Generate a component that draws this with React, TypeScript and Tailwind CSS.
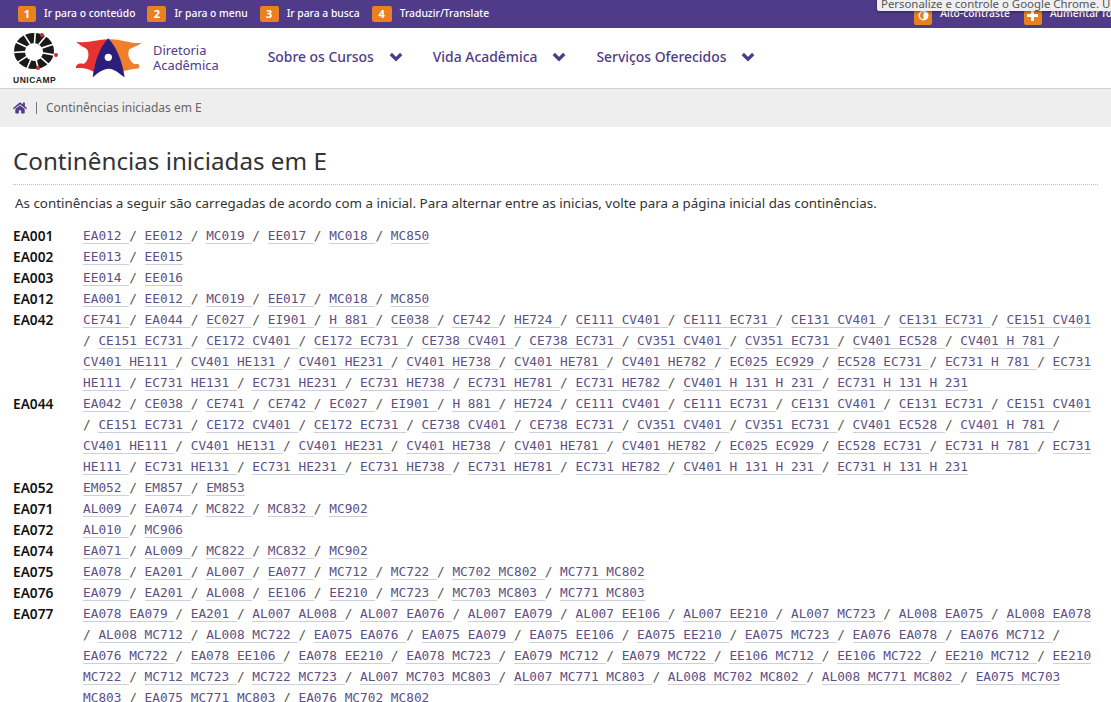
import React from "react";
import { FaHome } from "react-icons/fa";

type Entry = { code: string; links: string[] };

const sansFont = "font-['Noto_Sans','Open_Sans',sans-serif]";

const commonEA04x = [
  "CE111 CV401", "CE111 EC731", "CE131 CV401", "CE131 EC731", "CE151 CV401", "CE151 EC731",
  "CE172 CV401", "CE172 EC731", "CE738 CV401", "CE738 EC731", "CV351 CV401", "CV351 EC731",
  "CV401 EC528", "CV401 H 781", "CV401 HE111", "CV401 HE131", "CV401 HE231", "CV401 HE738",
  "CV401 HE781", "CV401 HE782", "EC025 EC929", "EC528 EC731", "EC731 H 781", "EC731 HE111",
  "EC731 HE131", "EC731 HE231", "EC731 HE738", "EC731 HE781", "EC731 HE782",
  "CV401 H 131 H 231", "EC731 H 131 H 231",
];

const entries: Entry[] = [
  { code: "EA001", links: ["EA012", "EE012", "MC019", "EE017", "MC018", "MC850"] },
  { code: "EA002", links: ["EE013", "EE015"] },
  { code: "EA003", links: ["EE014", "EE016"] },
  { code: "EA012", links: ["EA001", "EE012", "MC019", "EE017", "MC018", "MC850"] },
  { code: "EA042", links: ["CE741", "EA044", "EC027", "EI901", "H 881", "CE038", "CE742", "HE724", ...commonEA04x] },
  { code: "EA044", links: ["EA042", "CE038", "CE741", "CE742", "EC027", "EI901", "H 881", "HE724", ...commonEA04x] },
  { code: "EA052", links: ["EM052", "EM857", "EM853"] },
  { code: "EA071", links: ["AL009", "EA074", "MC822", "MC832", "MC902"] },
  { code: "EA072", links: ["AL010", "MC906"] },
  { code: "EA074", links: ["EA071", "AL009", "MC822", "MC832", "MC902"] },
  { code: "EA075", links: ["EA078", "EA201", "AL007", "EA077", "MC712", "MC722", "MC702 MC802", "MC771 MC802"] },
  { code: "EA076", links: ["EA079", "EA201", "AL008", "EE106", "EE210", "MC723", "MC703 MC803", "MC771 MC803"] },
  {
    code: "EA077",
    links: [
      "EA078 EA079", "EA201", "AL007 AL008", "AL007 EA076", "AL007 EA079", "AL007 EE106", "AL007 EE210",
      "AL007 MC723", "AL008 EA075", "AL008 EA078", "AL008 MC712", "AL008 MC722", "EA075 EA076", "EA075 EA079",
      "EA075 EE106", "EA075 EE210", "EA075 MC723", "EA076 EA078", "EA076 MC712", "EA076 MC722", "EA078 EE106",
      "EA078 EE210", "EA078 MC723", "EA079 MC712", "EA079 MC722", "EE106 MC712", "EE106 MC722", "EE210 MC712",
      "EE210 MC722", "MC712 MC723", "MC722 MC723", "AL007 MC703 MC803", "AL007 MC771 MC803", "AL008 MC702 MC802",
      "AL008 MC771 MC802", "EA075 MC703 MC803", "EA075 MC771 MC803", "EA076 MC702 MC802",
    ],
  },
];

const skipLinks = [
  { n: "1", label: "Ir para o conteúdo", w: "w-[18px]" },
  { n: "2", label: "Ir para o menu", w: "w-[19px]" },
  { n: "3", label: "Ir para a busca", w: "w-[19px]" },
  { n: "4", label: "Traduzir/Translate", w: "w-[20px]" },
];

const navItems = ["Sobre os Cursos", "Vida Acadêmica", "Serviços Oferecidos"];

function Chevron() {
  return (
    <svg className="ml-[15px]" width="14" height="10" viewBox="0 0 14 10">
      <path d="M1.8 2 L7 7.2 L12.2 2" fill="none" stroke="#4f3b87" strokeWidth="3.2" />
    </svg>
  );
}

function UnicampLogo() {
  const angles = Array.from({ length: 11 }, (_, i) => i * 32.7 + 12);
  return (
    <div className="flex w-[46px] flex-col items-start">
      <svg width="46" height="40" viewBox="0 0 46 40">
        <ellipse cx="21" cy="19" rx="20" ry="18" fill="#1a1a1a" />
        {angles.map((a) => {
          const r = (a * Math.PI) / 180;
          return (
            <line
              key={a}
              x1={21 + Math.cos(r) * 8}
              y1={19 + Math.sin(r) * 8}
              x2={21 + Math.cos(r) * 23}
              y2={19 + Math.sin(r) * 21}
              stroke="#fff"
              strokeWidth="1.6"
            />
          );
        })}
        <circle cx="21" cy="20" r="9" fill="#fff" />
        <circle cx="29" cy="3" r="2" fill="#d8262c" />
        <circle cx="43" cy="23" r="2" fill="#d8262c" />
        <circle cx="25" cy="36" r="2" fill="#d8262c" />
      </svg>
      <span className="mt-[4px] font-['Liberation_Sans',sans-serif] text-[8.5px] leading-[9px] font-bold tracking-[0.5px] text-[#222]">
        UNICAMP
      </span>
    </div>
  );
}

function DacLogo() {
  return (
    <svg width="72" height="44" viewBox="0 0 216 132">
      <path
        d="M12 17 C45 24 75 10 108 10 C85 40 72 70 65 107 C50 99 32 94 12 97 C10 86 22 80 34 84 C48 78 54 55 45 40 C35 32 22 28 12 17 Z"
        fill="#e5332f"
      />
      <path
        d="M210 20 C180 26 145 8 112 10 C135 40 145 70 152 107 C170 100 190 99 200 97 C206 86 198 82 188 85 C172 76 164 56 172 40 C184 32 198 30 210 20 Z"
        fill="#ef7f2b"
      />
      <path d="M109 7 C86 30 68 72 62 124 C78 110 95 98 110 98 C126 98 142 112 158 124 C150 72 132 30 109 7 Z" fill="#2a1f7a" />
      <circle cx="109" cy="64" r="11" fill="#fff" />
    </svg>
  );
}

export default function App() {
  return (
    <div className={`relative h-[702px] w-full overflow-hidden bg-white ${sansFont}`}>
      {/* barra de acessibilidade */}
      <div className="flex h-[28px] items-center overflow-hidden bg-[#4f3b87] pl-[18px] text-[10.3px] font-medium whitespace-nowrap text-white">
        {skipLinks.map((s) => (
          <div key={s.n} className="mr-[12px] flex items-center">
            <span className={`flex h-[16px] ${s.w} items-center justify-center rounded-[2px] bg-[#e8811f] text-[11px] font-bold`}>
              {s.n}
            </span>
            <span className="ml-[8px]">{s.label}</span>
          </div>
        ))}
        <div className="ml-[413px] flex shrink-0 items-center">
          <span className="mt-[3px] flex h-[18px] w-[18px] items-center justify-center rounded-[2px] bg-[#e8811f]">
            <svg width="11" height="11" viewBox="0 0 11 11">
              <circle cx="5.5" cy="5.5" r="5" fill="#fff" />
              <path d="M5.5 2 A3.5 3.5 0 0 0 5.5 9 Z" fill="#e8811f" />
            </svg>
          </span>
          <span className="ml-[8px]">Alto-contraste</span>
          <span className="mt-[3px] ml-[14px] flex h-[18px] w-[18px] items-center justify-center rounded-[2px] bg-[#e8811f]">
            <svg width="11" height="11" viewBox="0 0 11 11">
              <path d="M4 0 H7 V4 H11 V7 H7 V11 H4 V7 H0 V4 H4 Z" fill="#fff" />
            </svg>
          </span>
          <span className="ml-[8px]">Aumentar fonte</span>
        </div>
      </div>

      {/* tooltip por cima da barra */}
      <div className="absolute top-0 left-[877px] h-[11px] w-[240px] overflow-hidden rounded-bl-[2px] bg-[#f0f0f3] pl-[4px] text-[11.4px] leading-[8px] whitespace-nowrap text-[#555] shadow-[0_1px_3px_rgba(0,0,0,0.45)]">
        Personalize e controle o Google Chrome. Un
      </div>

      {/* cabeçalho */}
      <header className="flex h-[60px] items-center">
        <div className="ml-[13px] w-[46px]">
          <UnicampLogo />
        </div>
        <div className="ml-[13px]">
          <DacLogo />
        </div>
        <div className="ml-[9px] text-[12.9px] leading-[15px] text-[#4f3b87]">
          <div>Diretoria</div>
          <div>Acadêmica</div>
        </div>
        <nav className="-mt-[1px] ml-[49px] flex items-center text-[13.9px] font-medium text-[#4f3b87]">
          {navItems.map((item) => (
            <div key={item} className="mr-[30px] flex items-center">
              <span>{item}</span>
              <Chevron />
            </div>
          ))}
        </nav>
      </header>

      {/* breadcrumb */}
      <div className="flex h-[39px] items-center border-t border-[#d0d0d0] bg-[#eeeeee] pl-[13px] text-[12px] text-[#666]">
        <FaHome className="h-[14px] w-[14px] text-[#4f3b87]" />
        <span className="mx-[9px] h-[12px] w-px bg-[#777]" />
        <span>Continências iniciadas em E</span>
      </div>

      <main className="px-[13px]">
        <h1 className="mt-[16px] border-b border-dotted border-[#bbb] pb-[5px] text-[24.2px] leading-[36px] font-normal text-[#333]">
          Continências iniciadas em E
        </h1>
        <p className="mt-[8px] ml-[2px] text-[13.38px] leading-[20px] text-[#333]">
          As continências a seguir são carregadas de acordo com a inicial. Para alternar entre as inicias, volte para a
          página inicial das continências.
        </p>
        <dl className="mt-[12px]">
          {entries.map((e) => (
            <div key={e.code} className="flex">
              <dt className="w-[70px] shrink-0 text-[13.7px] leading-[21px] font-semibold text-[#111]">{e.code}</dt>
              <dd className="min-w-0 flex-1 font-['DejaVu_Sans_Mono',monospace] text-[12.79px] leading-[21px] text-[#555]">
                {e.links.map((l, i) => {
                  const last = i === e.links.length - 1;
                  return (
                    <React.Fragment key={l}>
                      <a className="border-b border-[#ccd0d8] text-[#5b4f85]">{last ? l : `${l} `}</a>
                      {last ? "" : "/ "}
                    </React.Fragment>
                  );
                })}
              </dd>
            </div>
          ))}
        </dl>
      </main>
    </div>
  );
}
